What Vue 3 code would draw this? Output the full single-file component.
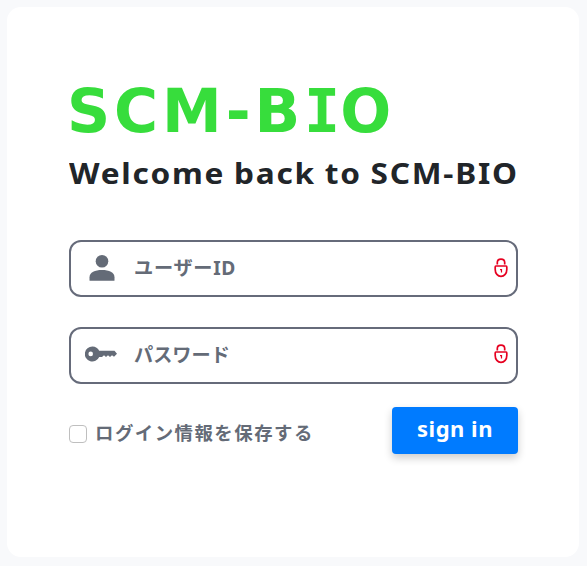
<template>
	<main class="card">
		<h1>SCM-B<span>I</span>O</h1>
		<h2>Welcome back to SCM-BIO</h2>

		<form @submit.prevent>
			<div class="field">
				<svg class="user" viewBox="0 0 26 26">
					<circle cx="13" cy="6.3" r="6.3" />
					<path d="M.5 25.2v-3C.5 17.5 6 15 13 15s12.500 2.500 12.500 7.200v3q0 .5-.5.5H1q-.5 0-.5-.5z" />
				</svg>
				<input v-model="userId" class="user-id" type="text" placeholder="ユーザーID" />
				<svg class="lock" viewBox="0 0 14 20">
					<path d="M3.300 6.500V4.600C3.300 2.200 4.700 1.200 7 1.200s3.700 1 3.700 3.400v1.900M1.900 8h10.200q.7 0 .7.900v2.500c0 4-2.500 6.900-5.800 6.900s-5.800-2.900-5.800-6.900V8.900q0-.9.700-.9z" />
					<path class="keyhole" d="M6 11.600h1.500v3" />
				</svg>
			</div>

			<div class="field">
				<svg class="key" viewBox="0 0 32 16">
					<path fill-rule="evenodd" d="M7.500.5c3 0 5.500 1.700 6.700 4.300h15.300l2.500 3-3 3-2-1.600-2 1.800-2-1.800-2 1.800-2-1.800-2 1.800h-2.800A7.500 7.500 0 1 1 7.500.5zM5.700 5.600a2.300 2.300 0 1 0 0 4.600 2.300 2.300 0 0 0 0-4.600z" />
				</svg>
				<input v-model="password" type="password" placeholder="パスワード" />
				<svg class="lock" viewBox="0 0 14 20">
					<path d="M3.300 6.500V4.600C3.300 2.200 4.700 1.200 7 1.200s3.700 1 3.700 3.400v1.900M1.900 8h10.200q.7 0 .7.900v2.500c0 4-2.500 6.900-5.800 6.900s-5.800-2.900-5.800-6.900V8.900q0-.9.700-.9z" />
					<path class="keyhole" d="M6 11.600h1.500v3" />
				</svg>
			</div>

			<div class="actions">
				<label>
					<input v-model="remember" type="checkbox" />
					<span>ログイン情報を保存する</span>
				</label>
				<button>sign in</button>
			</div>
		</form>
	</main>
</template>

<script setup>
import { ref } from 'vue';

const userId = ref('');
const password = ref('');
const remember = ref(false);
</script>

<style>
body {
	background: #f8f9fb;
}
</style>

<style scoped>
* {
	margin: 0;
	padding: 0;
	box-sizing: border-box;
}

.card {
	width: 572px;
	height: 550px;
	margin: 7px 7px 0;
	padding: 66px 61px 0 62px;
	background: #fff;
	border-radius: 14px;
	font-family: 'Noto Sans', 'Noto Sans CJK JP', sans-serif;
	overflow: hidden;
}

h1 {
	height: 78px;
	margin-left: -2px;
	line-height: 76px;
	font-family: 'DejaVu Sans', sans-serif;
	font-size: 60px;
	font-weight: 700;
	letter-spacing: 3.9px;
	color: #37dd3c;
	white-space: nowrap;
}

h1 span {
	font-family: 'DejaVu Sans Mono', monospace;
	letter-spacing: 0;
	line-height: 1;
}

h2 {
	width: max-content;
	height: 42px;
	line-height: 44px;
	font-size: 29px;
	font-weight: 700;
	letter-spacing: 1.6px;
	word-spacing: -1px;
	color: #212529;
	white-space: nowrap;
	transform: scaleX(1.09);
	transform-origin: left;
}

form {
	padding-top: 47px;
}

.field {
	display: flex;
	align-items: center;
	height: 57px;
	margin-bottom: 30px;
	border: 2px solid #666b7a;
	border-radius: 12px;
}

.field + .field {
	margin-bottom: 23px;
}

.user {
	width: 26px;
	height: 26px;
	margin: 0 19px 2px 18px;
	fill: #646b77;
}

.key {
	width: 32px;
	height: 16px;
	margin: 0 17px 4px 14px;
	fill: #646b77;
}

.field input {
	flex: 1;
	min-width: 0;
	height: 53px;
	padding-bottom: 3px;
	border: none;
	outline: none;
	background: transparent;
	font-family: 'Noto Sans', 'Noto Sans CJK JP', sans-serif;
	font-size: 19.2px;
	font-weight: 700;
}

.field .user-id {
	padding-bottom: 2px;
	letter-spacing: 0.7px;
}

.field input::placeholder {
	color: #646b77;
	opacity: 1;
}

.lock {
	width: 14px;
	height: 20px;
	margin: 0 8px 1px 0;
	fill: none;
	stroke: #e60020;
	stroke-width: 1.700;
}

.field + .field .lock {
	margin-bottom: 3px;
}

.keyhole {
	stroke-width: 1.200;
}

.actions {
	display: flex;
	justify-content: space-between;
	align-items: flex-start;
}

label {
	display: flex;
	align-items: center;
	gap: 8px;
	height: 53px;
	color: #646b77;
	font-size: 18.4px;
	font-weight: 700;
	letter-spacing: 1.5px;
}

label span {
	padding-bottom: 4px;
}

label input {
	appearance: none;
	width: 18px;
	height: 18px;
	border: 1px solid #bfbfbf;
	border-radius: 4px;
	background: #fff;
}

button {
	width: 126px;
	height: 47px;
	padding-bottom: 5px;
	border: none;
	border-radius: 4px;
	background: #007bff;
	box-shadow: 0 4px 8px rgba(0, 0, 0, 0.2);
	color: #fff;
	font-family: 'Noto Sans', sans-serif;
	font-size: 22px;
	font-weight: 700;
	letter-spacing: 0.5px;
}
</style>
